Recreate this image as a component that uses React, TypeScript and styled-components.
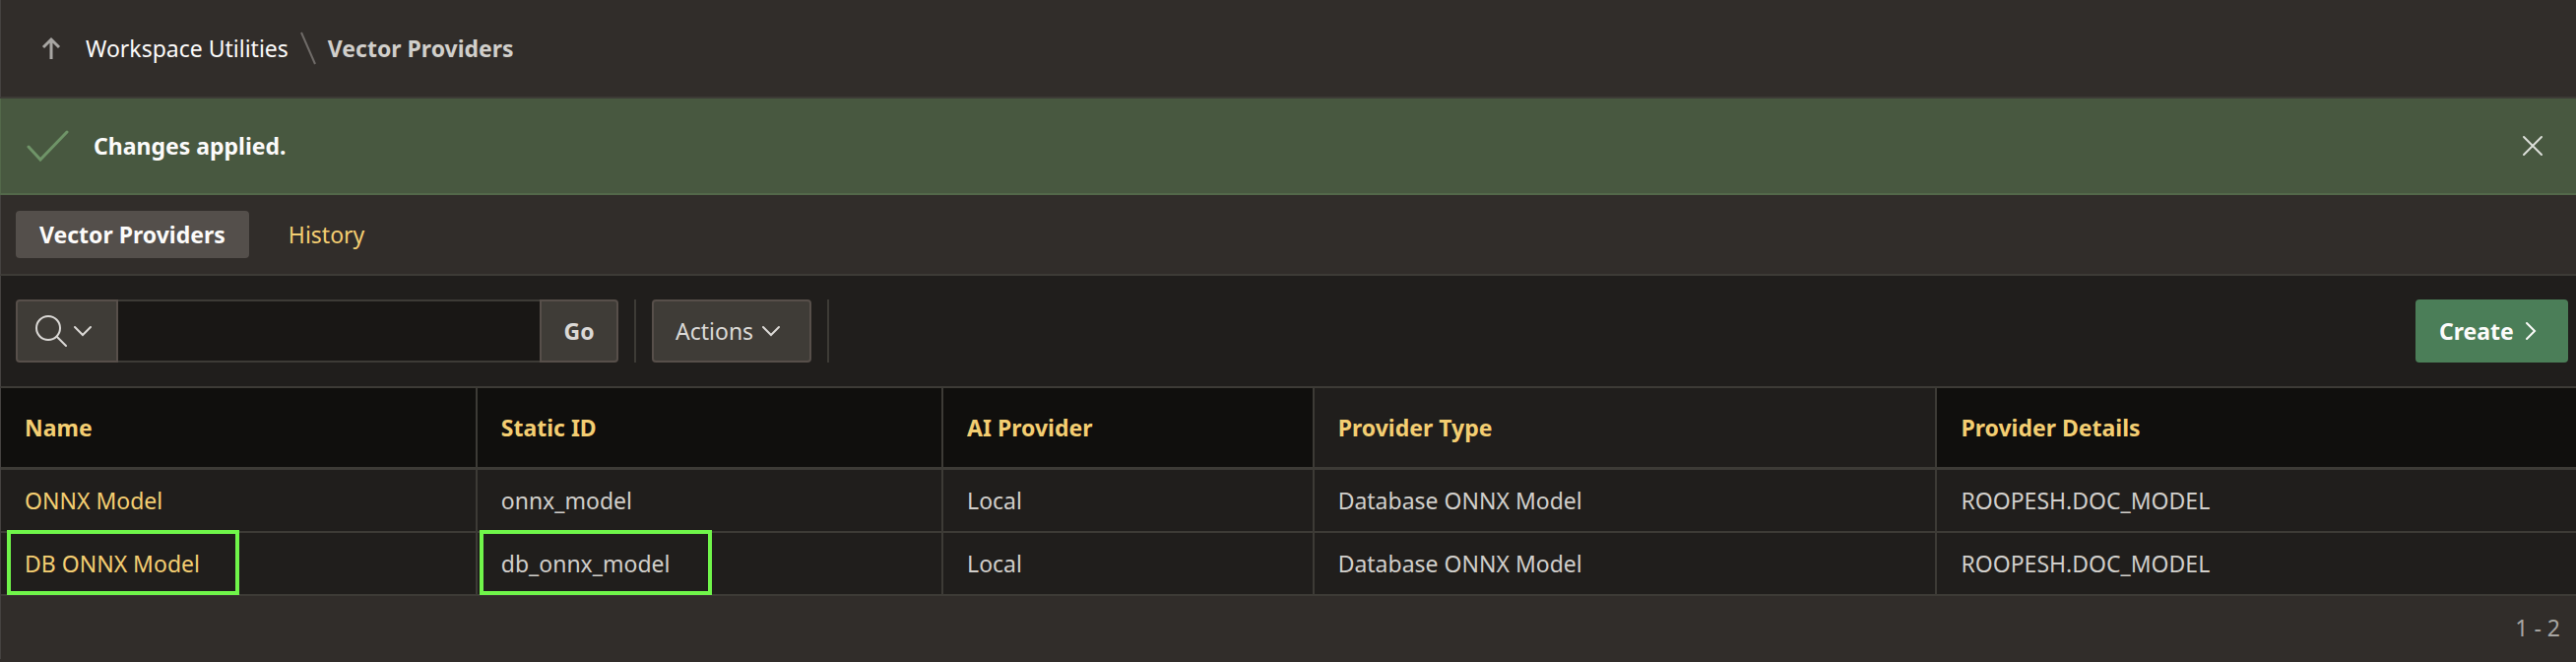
import React from "react";
import styled, { createGlobalStyle, css } from "styled-components";

const color = {
  panel: "#312d2a",
  surface: "#201e1c",
  header: "#100f0d",
  line: "#3d3b36",
  edge: "#454240",
  control: "#3f3c37",
  controlLine: "#574f4a",
  text: "#d1cfcb",
  muted: "#a8a6a3",
  gold: "#f4ce72",
  success: "#485840",
  successLine: "#53684a",
  green: "#4b7e58",
  highlight: "#70f54a",
};

const GlobalStyle = createGlobalStyle`
  *, *::before, *::after { box-sizing: border-box; }
  body {
    margin: 0;
    background: ${color.panel};
    color: ${color.text};
    font-family: "Noto Sans", "Open Sans", sans-serif;
    font-size: 23px;
    line-height: 32px;
  }
  button, input { font: inherit; }
  a { text-decoration: none; }
`;

const band = css`
  display: flex;
  align-items: center;
  border-left: 1px solid ${color.edge};
  border-bottom: 2px solid ${color.line};
`;

const BreadcrumbBar = styled.header`
  ${band}
  height: 100px;
  padding: 0 40px;
`;

const UpLink = styled.a`
  display: flex;
  margin-right: 24px;
  color: ${color.muted};
`;

const Crumbs = styled.ol`
  display: flex;
  align-items: center;
  gap: 10px;
  margin: 0;
  padding: 0;
  list-style: none;
`;

const Crumb = styled.li<{ $current?: boolean }>`
  display: flex;
  align-items: center;
  gap: 10px;
  color: ${(p) => (p.$current ? color.text : "#fcfbfa")};
  font-weight: ${(p) => (p.$current ? 700 : 400)};
  a { color: inherit; }
`;

const Alert = styled.div`
  ${band}
  height: 98px;
  padding: 0 25px;
  gap: 25px;
  background: ${color.success};
  border-color: ${color.successLine};
  color: #fcfbfa;
  font-weight: 700;
`;

const CloseButton = styled.button`
  display: flex;
  margin-left: auto;
  padding: 8px;
  border: 0;
  background: none;
  color: #dcdfd9;
`;

const Tabs = styled.nav`
  ${band}
  height: 82px;
  padding: 0 15px;
  gap: 16px;
`;

const Tab = styled.a<{ $active?: boolean }>`
  padding: 8px 24px;
  border-radius: 4px;
  background: ${(p) => (p.$active ? "#544f4b" : "transparent")};
  color: ${(p) => (p.$active ? "#fcfbfa" : color.gold)};
  font-weight: ${(p) => (p.$active ? 700 : 400)};
`;

const Toolbar = styled.div`
  ${band}
  height: 114px;
  padding: 0 8px 0 15px;
  gap: 16px;
  background: ${color.surface};
`;

const SearchForm = styled.form`
  display: flex;
  height: 64px;
`;

const ToolButton = styled.button<{ $side?: "left" | "right" }>`
  display: flex;
  align-items: center;
  height: 64px;
  border: 2px solid ${color.controlLine};
  border-radius: ${(p) => (p.$side === "left" ? "4px 0 0 4px" : p.$side === "right" ? "0 4px 4px 0" : "4px")};
  background: ${color.control};
  color: #dbd9d6;
`;

const SearchOptions = styled(ToolButton)`
  gap: 6px;
  width: 104px;
  padding: 0 16px;
`;

const GoButton = styled(ToolButton)`
  justify-content: center;
  width: 80px;
  padding: 0;
  font-weight: 700;
`;

const ActionsButton = styled(ToolButton)`
  gap: 8px;
  width: 162px;
  padding: 0 22px;
`;

const SearchInput = styled.input`
  width: 428px;
  min-width: 0;
  padding: 0 16px;
  border: solid ${color.line};
  border-width: 2px 0;
  border-radius: 0;
  outline: 0;
  background: #191715;
  color: ${color.text};
`;

const Divider = styled.span`
  width: 2px;
  height: 64px;
  background: ${color.line};
`;

const CreateButton = styled.button`
  display: flex;
  align-items: center;
  gap: 8px;
  width: 155px;
  height: 64px;
  margin-left: auto;
  padding: 0 24px;
  border: 0;
  border-radius: 4px;
  background: ${color.green};
  color: #fcfbfa;
  font-weight: 700;
`;

const Table = styled.table`
  width: 100%;
  table-layout: fixed;
  border-collapse: separate;
  border-spacing: 0;
  border-left: 1px solid ${color.edge};
`;

const Column = styled.col<{ $share: string }>`
  width: ${(p) => p.$share};
`;

const HeaderCell = styled.th<{ $sortable?: boolean }>`
  height: 83px;
  padding: 0 24px;
  border-right: 2px solid ${color.line};
  border-bottom: 3px solid ${color.line};
  background: ${(p) => (p.$sortable ? color.header : color.surface)};
  color: ${color.gold};
  font-weight: 700;
  text-align: left;
  &:last-child { border-right: 0; }
`;

const Cell = styled.td`
  position: relative;
  height: 64px;
  padding: 0 24px;
  border-right: 2px solid ${color.line};
  border-bottom: 2px solid ${color.line};
  background: ${color.surface};
  &:last-child { border-right: 0; }
  a { color: ${color.gold}; }
`;

const Highlight = styled.span<{ $left: number }>`
  position: absolute;
  z-index: 1;
  top: -3px;
  left: ${(p) => p.$left}px;
  width: 236px;
  height: 66px;
  border: 4px solid ${color.highlight};
  pointer-events: none;
`;

const Footer = styled.footer`
  display: flex;
  justify-content: flex-end;
  padding: 16px;
  border-left: 1px solid ${color.edge};
  color: ${color.muted};
`;

const UpArrow = () => (
  <svg width="22" height="24" viewBox="0 0 22 24" fill="none" stroke="currentColor" strokeWidth="3" aria-hidden="true">
    <path d="M11 23V4M3 11L11 3L19 11" />
  </svg>
);

const Slash = () => (
  <svg width="20" height="34" viewBox="0 0 20 34" fill="none" stroke="#6f6b68" strokeWidth="2" aria-hidden="true">
    <path d="M3 1L17 33" />
  </svg>
);

const Check = () => (
  <svg width="44" height="34" viewBox="0 0 44 34" fill="none" stroke="#6f9468" strokeWidth="3" strokeLinecap="round" aria-hidden="true">
    <path d="M3 18L15 31L42 3" />
  </svg>
);

const Cross = () => (
  <svg width="22" height="22" viewBox="0 0 22 22" fill="none" stroke="currentColor" strokeWidth="2" strokeLinecap="round" aria-hidden="true">
    <path d="M2 2L20 20M20 2L2 20" />
  </svg>
);

const Magnifier = () => (
  <svg width="34" height="34" viewBox="0 0 34 34" fill="none" stroke="currentColor" strokeWidth="2" strokeLinecap="round" aria-hidden="true">
    <circle cx="15" cy="14" r="12" />
    <path d="M24 23L33 32" />
  </svg>
);

const ChevronDown = () => (
  <svg width="20" height="12" viewBox="0 0 20 12" fill="none" stroke="currentColor" strokeWidth="2" strokeLinecap="round" aria-hidden="true">
    <path d="M2 2L10 10L18 2" />
  </svg>
);

const ChevronRight = () => (
  <svg width="16" height="20" viewBox="0 0 16 20" fill="none" stroke="currentColor" strokeWidth="2" strokeLinecap="round" aria-hidden="true">
    <path d="M5 2L13 10L5 18" />
  </svg>
);

const columns = [
  { label: "Name", share: "18.5%", sortable: true },
  { label: "Static ID", share: "18.1%", sortable: true },
  { label: "AI Provider", share: "14.4%", sortable: true },
  { label: "Provider Type", share: "24.2%", sortable: false },
  { label: "Provider Details", share: "24.8%", sortable: true },
];

const providers = [
  { name: "ONNX Model", id: "onnx_model", marked: false },
  { name: "DB ONNX Model", id: "db_onnx_model", marked: true },
];

export default function App() {
  return (
    <>
      <GlobalStyle />
      <BreadcrumbBar>
        <UpLink href="#up" aria-label="Up one level"><UpArrow /></UpLink>
        <nav aria-label="Breadcrumb">
          <Crumbs>
            <Crumb><a href="#utilities">Workspace Utilities</a><Slash /></Crumb>
            <Crumb $current>Vector Providers</Crumb>
          </Crumbs>
        </nav>
      </BreadcrumbBar>
      <Alert role="status">
        <Check />
        Changes applied.
        <CloseButton type="button" aria-label="Close"><Cross /></CloseButton>
      </Alert>
      <Tabs>
        <Tab href="#providers" $active aria-current="page">Vector Providers</Tab>
        <Tab href="#history">History</Tab>
      </Tabs>
      <main>
        <Toolbar>
          <SearchForm role="search" onSubmit={(e) => e.preventDefault()}>
            <SearchOptions type="button" $side="left" aria-label="Select columns to search">
              <Magnifier />
              <ChevronDown />
            </SearchOptions>
            <SearchInput type="text" aria-label="Search report" />
            <GoButton type="submit" $side="right">Go</GoButton>
          </SearchForm>
          <Divider />
          <ActionsButton type="button">Actions<ChevronDown /></ActionsButton>
          <Divider />
          <CreateButton type="button">Create<ChevronRight /></CreateButton>
        </Toolbar>
        <Table>
          <colgroup>
            {columns.map((c) => <Column key={c.label} $share={c.share} />)}
          </colgroup>
          <thead>
            <tr>
              {columns.map((c) => (
                <HeaderCell key={c.label} scope="col" $sortable={c.sortable}>{c.label}</HeaderCell>
              ))}
            </tr>
          </thead>
          <tbody>
            {providers.map((p) => (
              <tr key={p.id}>
                <Cell><a href={`#${p.id}`}>{p.name}</a>{p.marked && <Highlight $left={6} />}</Cell>
                <Cell>{p.id}{p.marked && <Highlight $left={2} />}</Cell>
                <Cell>Local</Cell>
                <Cell>Database ONNX Model</Cell>
                <Cell>ROOPESH.DOC_MODEL</Cell>
              </tr>
            ))}
          </tbody>
        </Table>
      </main>
      <Footer>1 - 2</Footer>
    </>
  );
}
